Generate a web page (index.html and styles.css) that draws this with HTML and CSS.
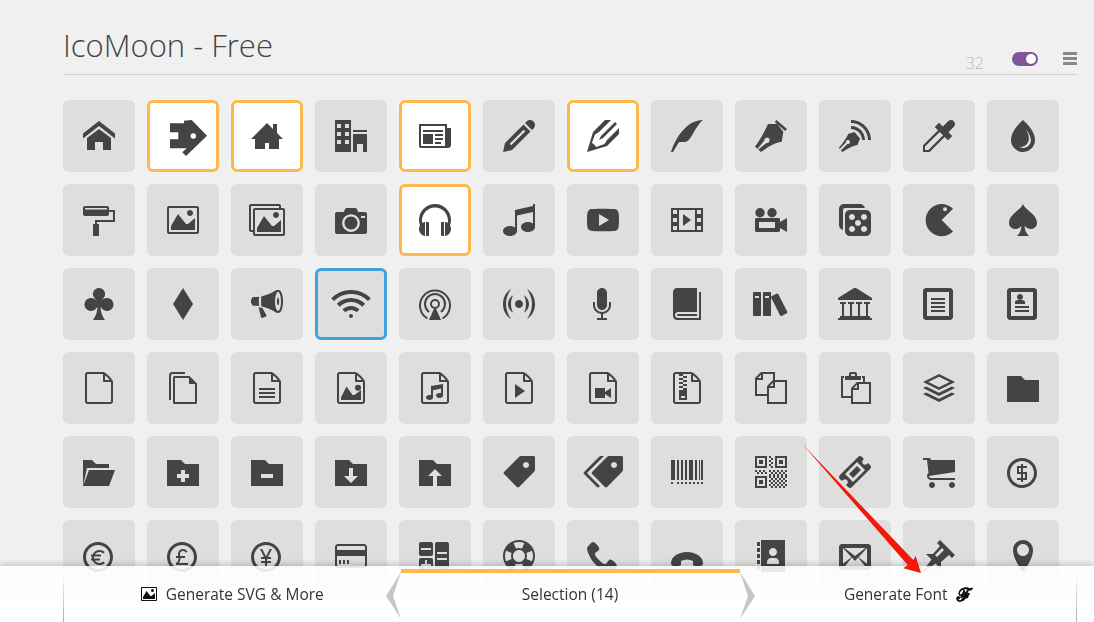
FILE: index.html
```html
<!DOCTYPE html>
<html lang="en">
<head>
	<meta charset="UTF-8">
	<title>IcoMoon - Free</title>
	<link rel="stylesheet" href="styles.css">
</head>
<body>
<div class="page">
	<div class="head">
		<h1 class="title">IcoMoon - Free</h1>
		<div class="tools">
			<span class="size">32</span>
			<span class="toggle"><i class="knob"></i></span>
			<span class="menu"><i></i><i></i><i></i></span>
		</div>
	</div>

	<div class="grid">
		<!-- row 1 -->
		<div class="tile"><svg class="ico" viewBox="0 0 32 32"><path d="M32 18.451l-16-12.42-16 12.42v-5.064l16-12.42 16 12.42zM28 18v12h-8v-8h-8v8h-8v-12l12-9z"/></svg></div>
		<div class="tile sel"><svg class="ico" viewBox="0 0 32 32"><path fill-rule="evenodd" d="M3 3.3h14v-2.6l7.7-.7 15.3 15.7-21 20.3-3.7-3.7 4.4-4h-16.7v-9h8.3v-7h-8.3zM26.3 13.3a2.7 2.7 0 1 0 0 5.4 2.7 2.7 0 1 0 0-5.4z"/></svg></div>
		<div class="tile sel"><svg class="ico" viewBox="0 0 32 32"><path d="M32 19l-6-6v-9h-4v5l-6-6-16 16h4v10h10v-6h4v6h10v-10h4z"/></svg></div>
		<div class="tile"><svg class="ico" viewBox="0 0 32 32"><path d="M0 32h16v-32h-16v32zM10 4h4v4h-4v-4zM10 12h4v4h-4v-4zM10 20h4v4h-4v-4zM2 4h4v4h-4v-4zM2 12h4v4h-4v-4zM2 20h4v4h-4v-4zM18 10h14v2h-14zM18 32h4v-8h6v8h4v-18h-14z"/></svg></div>
		<div class="tile sel"><svg class="ico" viewBox="0 0 32 32"><path d="M28 8v-4h-28v22c0 1.105 0.895 2 2 2h27c1.657 0 3-1.343 3-3v-17h-4zM26 26h-24v-20h24v20zM4 10h20v2h-20zM16 14h8v2h-8zM16 18h8v2h-8zM16 22h6v2h-6zM4 14h10v10h-10z"/></svg></div>
		<div class="tile"><svg class="ico" viewBox="0 0 32 32"><path d="M27 0c2.761 0 5 2.239 5 5 0 1.126-0.372 2.164-1 3l-2 2-7-7 2-2c0.836-0.628 1.874-1 3-1zM2 23l-2 9 9-2 18.5-18.5-7-7-18.5 18.5zM22.362 11.362l-14 14-1.724-1.724 14-14 1.724 1.724z"/></svg></div>
		<div class="tile sel"><svg class="ico" viewBox="0 0 32 32"><path d="M12 20l4-2 14-14-2-2-14 14-2 4zM9.041 27.097c-0.989-2.085-2.052-3.149-4.137-4.137l3.097-8.525 4-2.435 12-12h-6l-12 12-6 20 20-6 12-12v-6l-12 12-2.435 4z"/></svg></div>
		<div class="tile"><svg class="ico" viewBox="0 0 32 32"><path d="M0 32c4-12 14.469-32 32-32-8.219 6.594-12 22-18 22s-6 0-6 0l-6 10h-2z"/></svg></div>
		<div class="tile"><svg class="ico" viewBox="0 0 32 32"><path d="M21.500 0l10.500 9-1.800 2-10.500-9zM13 4l9-.3 6.300 8-1.600 10c-7.700 1.300-13.700 5.300-20.700 10.300l-2.700-2.500 8.200-6.500a2.700 2.700 0 1 0-2.300-2.300l-6.700 8-2.500-2c5-6.700 9-13.700 13-22.700z"/></svg></div>
		<div class="tile"><svg class="ico" viewBox="0 0 32 32"><path d="M12 0c11 0 20 9 20 20h-3c0-9.400-7.600-17-17-17zM12 6c7.700 0 14 6.300 14 14h-3c0-6-5-11-11-11zM9 14l6.500-2 5.500 6.500-2.500 6.500c-5.500 1-10.500 4-15 7l-1.800-1.500 6.800-6.500a2 2 0 1 0-1.500-1.500l-6.500 6.500-.5-1.500c4-4.500 7-8.500 9-13z"/></svg></div>
		<div class="tile"><svg class="ico" viewBox="0 0 32 32"><path d="M30.828 1.172c-1.562-1.562-4.095-1.562-5.657 0l-5.379 5.379-3.793-3.793-4.243 4.243 3.326 3.326-14.754 14.754c-0.252 0.252-0.328 0.626-0.328 0.919v6h6c0.293 0 0.667-0.076 0.919-0.328l14.754-14.754 3.326 3.326 4.243-4.243-3.793-3.793 5.379-5.379c1.562-1.562 1.562-4.095 0-5.657zM5.409 30h-3.409v-3.409l14.674-14.674 3.409 3.409-14.674 14.674z"/></svg></div>
		<div class="tile"><svg class="ico" viewBox="0 0 32 32"><path d="M27.020 14.786c-2.055-5.732-6.41-10.765-11.020-14.786-4.61 4.021-8.965 9.054-11.020 14.786-1.271 3.545-1.396 7.393 0.393 10.794 2.058 3.913 6.288 6.419 10.627 6.419s8.569-2.506 10.627-6.419c1.789-3.401 1.664-7.249 0.393-10.794zM23.086 23.717c-1.4 2.662-4.298 4.283-7.086 4.283-1.382 0-2.719-0.43-3.912-1.126 0.436 0.082 0.88 0.126 1.328 0.126 3.015 0 5.902-1.654 7.354-4.214 1.471-2.596 1.32-5.833 0.417-8.612-0.553-1.703-1.249-3.302-2.082-4.874 1.691 2.174 3.168 4.543 4.102 7.147 0.98 2.733 0.98 5.245-0.121 7.27z"/></svg></div>

		<!-- row 2 -->
		<div class="tile"><svg class="ico" viewBox="0 0 32 32"><path fill-rule="evenodd" d="M2 2h22c1.100 0 2 .900 2 2v2h6v12h-18v2h1c.550 0 1 .450 1 1v10c0 .550-.450 1-1 1h-4c-.550 0-1-.450-1-1v-10c0-.550 .450-1 1-1h1v-4h18v-8h-4v2c0 1.100-.900 2-2 2h-22c-1.100 0-2-.900-2-2v-6c0-1.100 .900-2 2-2zM2 4v1.500h22v-1.500z"/></svg></div>
		<div class="tile"><svg class="ico" viewBox="0 0 32 32"><path d="M29.996 4c0.001 0.001 0.003 0.002 0.004 0.004v23.993c-0.001 0.001-0.002 0.003-0.004 0.004h-27.993c-0.001-0.001-0.003-0.002-0.004-0.004v-23.993c0.001-0.001 0.002-0.003 0.004-0.004h27.993zM30 2h-28c-1.1 0-2 0.9-2 2v24c0 1.1 0.9 2 2 2h28c1.1 0 2-0.9 2-2v-24c0-1.1-0.9-2-2-2v0zM26 9c0 1.657-1.343 3-3 3s-3-1.343-3-3 1.343-3 3-3 3 1.343 3 3zM28 26h-24v-4l7-12 8 10h2l7-6z"/></svg></div>
		<div class="tile"><svg class="ico" viewBox="0 0 32 32"><path transform="translate(-2 0)" d="M34 4h-2v-2c0-1.1-0.9-2-2-2h-28c-1.1 0-2 0.9-2 2v24c0 1.1 0.9 2 2 2h2v2c0 1.1 0.9 2 2 2h28c1.1 0 2-0.9 2-2v-24c0-1.1-0.9-2-2-2zM4 6v20h-1.996c-0.001-0.001-0.003-0.002-0.004-0.004v-23.993c0.001-0.001 0.002-0.003 0.004-0.004h27.993c0.001 0.001 0.003 0.002 0.004 0.004v1.996h-24c-1.1 0-2 0.9-2 2v0zM34 29.996c-0.001 0.001-0.002 0.003-0.004 0.004h-27.993c-0.001-0.001-0.003-0.002-0.004-0.004v-23.993c0.001-0.001 0.002-0.003 0.004-0.004h27.993c0.001 0.001 0.003 0.002 0.004 0.004v23.993zM30 11c0 1.657-1.343 3-3 3s-3-1.343-3-3 1.343-3 3-3 3 1.343 3 3zM32 28h-24v-4l7-12 8 10h2l7-6z"/></svg></div>
		<div class="tile"><svg class="ico" viewBox="0 0 32 32"><path d="M9.5 19c0 3.59 2.91 6.5 6.5 6.5s6.5-2.91 6.5-6.5-2.91-6.5-6.5-6.5-6.5 2.91-6.5 6.5zM30 8h-7c-0.5-2-1-4-3-4h-8c-2 0-2.5 2-3 4h-7c-1.1 0-2 0.9-2 2v18c0 1.1 0.9 2 2 2h28c1.1 0 2-0.9 2-2v-18c0-1.1-0.9-2-2-2zM16 27.875c-4.902 0-8.875-3.973-8.875-8.875s3.973-8.875 8.875-8.875c4.902 0 8.875 3.973 8.875 8.875s-3.973 8.875-8.875 8.875zM30 14h-4v-2h4v2z"/></svg></div>
		<div class="tile sel"><svg class="ico" viewBox="0 0 32 32"><path d="M9 18h-2v14h2c0.55 0 1-0.45 1-1v-12c0-0.55-0.45-1-1-1zM23 18c-0.55 0-1 0.45-1 1v12c0 0.55 0.45 1 1 1h2v-14h-2zM32 16c0-8.837-7.163-16-16-16s-16 7.163-16 16c0 1.919 0.338 3.759 0.958 5.464-0.609 1.038-0.958 2.246-0.958 3.536 0 3.526 2.608 6.443 6 6.929v-13.857c-0.997 0.143-1.927 0.495-2.742 1.012-0.168-0.835-0.258-1.699-0.258-2.584 0-7.18 5.82-13 13-13s13 5.82 13 13c0 0.885-0.088 1.749-0.257 2.584-0.816-0.517-1.745-0.87-2.743-1.013v13.858c3.392-0.485 6-3.402 6-6.929 0-1.29-0.349-2.498-0.958-3.536 0.62-1.705 0.958-3.545 0.958-5.465z"/></svg></div>
		<div class="tile"><svg class="ico" viewBox="0 0 32 32"><path d="M30 0h2v23c0 2.761-3.134 5-7 5s-7-2.239-7-5 3.134-5 7-5c1.959 0 3.729 0.575 5 1.501v-11.501l-16 3.556v15.444c0 2.761-3.134 5-7 5s-7-2.239-7-5 3.134-5 7-5c1.959 0 3.729 0.575 5 1.501v-17.501l18-4z"/></svg></div>
		<div class="tile"><svg class="ico" viewBox="0 0 32 32"><path d="M31.681 9.6c0 0-0.313-2.206-1.275-3.175-1.219-1.275-2.581-1.281-3.206-1.356-4.475-0.325-11.194-0.325-11.194-0.325h-0.012c0 0-6.719 0-11.194 0.325-0.625 0.075-1.987 0.081-3.206 1.356-0.963 0.969-1.269 3.175-1.269 3.175s-0.319 2.588-0.319 5.181v2.425c0 2.587 0.319 5.181 0.319 5.181s0.313 2.206 1.269 3.175c1.219 1.275 2.819 1.231 3.531 1.369 2.563 0.244 10.881 0.319 10.881 0.319s6.725-0.012 11.2-0.331c0.625-0.075 1.987-0.081 3.206-1.356 0.962-0.969 1.275-3.175 1.275-3.175s0.319-2.587 0.319-5.181v-2.425c-0.006-2.588-0.325-5.181-0.325-5.181zM12 22v-12l10 6z"/></svg></div>
		<div class="tile"><svg class="ico" viewBox="0 0 32 32"><path d="M0 4v24h32v-24h-32zM6 26h-4v-4h4v4zM6 18h-4v-4h4v4zM6 10h-4v-4h4v4zM24 26h-16v-20h16v20zM30 26h-4v-4h4v4zM30 18h-4v-4h4v4zM30 10h-4v-4h4v4zM12 10v12l8-6z"/></svg></div>
		<div class="tile"><svg class="ico" viewBox="0 0 32 32"><path fill-rule="evenodd" d="M5 4a4.700 4.700 0 1 0 0 9.400 4.700 4.700 0 1 0 0-9.400zM17 4a4.700 4.700 0 1 0 0 9.400 4.700 4.700 0 1 0 0-9.400zM1.500 14h22c.800 0 1.500 .700 1.500 1.500v2.500l7-4v14l-7-4v2.500c0 .800-.700 1.500-1.500 1.500h-22c-.800 0-1.500-.700-1.500-1.500v-11c0-.800 .700-1.500 1.500-1.500zM4 18v6h16v-6z"/></svg></div>
		<div class="tile"><svg class="ico" viewBox="0 0 32 32"><path d="M27 6h-16c-2.75 0-5 2.25-5 5v16c0 2.75 2.25 5 5 5h16c2.75 0 5-2.25 5-5v-16c0-2.75-2.25-5-5-5zM13 28c-1.657 0-3-1.343-3-3s1.343-3 3-3 3 1.343 3 3-1.343 3-3 3zM13 16c-1.657 0-3-1.343-3-3s1.343-3 3-3 3 1.343 3 3-1.343 3-3 3zM19 22c-1.657 0-3-1.343-3-3s1.343-3 3-3 3 1.343 3 3-1.343 3-3 3zM25 28c-1.657 0-3-1.343-3-3s1.343-3 3-3 3 1.343 3 3-1.343 3-3 3zM25 16c-1.657 0-3-1.343-3-3s1.343-3 3-3 3 1.343 3 3-1.343 3-3 3zM25.899 4c-0.467-2.275-2.491-4-4.899-4h-16c-2.75 0-5 2.25-5 5v16c0 2.408 1.725 4.432 4 4.899v-19.899c0-1.1 0.9-2 2-2h19.899z"/></svg></div>
		<div class="tile"><svg class="ico" viewBox="0 0 32 32"><path fill-rule="evenodd" d="M30.500 4.800c-6.200-6.300-16.300-6.400-22.600-.100s-6.300 16.400 0 22.700 16.400 6.300 22.600 0l-11.300-11.400zM22.500 3.300a2 2 0 1 0 0 4 2 2 0 1 0 0-4z" transform="translate(-.5 0)"/></svg></div>
		<div class="tile"><svg class="ico" viewBox="0 0 32 32"><path d="M16 0c-2 6-14 10-14 19 0 3.500 3 6 6 6 2.500 0 4.500-1 6.500-3-.2 4-1.500 7-4.500 10h12c-3-3-4.300-6-4.500-10 2 2 4 3 6.500 3 3 0 6-2.500 6-6 0-9-12-13-14-19z"/></svg></div>

		<!-- row 3 -->
		<div class="tile"><svg class="ico" viewBox="0 0 32 32"><path d="M16 0a6 6 0 0 1 4.500 10c-.8 .9-2 2-2.300 3 1-2 3.300-3 5.800-3a6.500 6.500 0 1 1-5.500 10l-1-1c.3 5 1.500 9 4.500 13h-12c3-4 4.200-8 4.500-13l-1 1a6.500 6.500 0 1 1-5.500-10c2.500 0 4.800 1 5.800 3-.3-1-1.500-2.100-2.300-3a6 6 0 0 1 4.500-10z"/></svg></div>
		<div class="tile"><svg class="ico" viewBox="0 0 32 32"><path d="M16 0l10 16-10 16-10-16z"/></svg></div>
		<div class="tile"><svg class="ico" viewBox="0 0 32 32"><path d="M32 13.414c0-6.279-1.837-11.373-4.109-11.413 0.009-0 0.018-0.001 0.027-0.001h-2.592c0 0-6.088 4.573-14.851 6.367-0.268 1.415-0.438 3.102-0.438 5.047s0.171 3.631 0.438 5.047c8.763 1.794 14.851 6.367 14.851 6.367h2.592c-0.009 0-0.018-0.001-0.027-0.002 2.272-0.040 4.109-5.133 4.109-11.412zM27.026 23.102c-0.293 0-0.61-0.304-0.773-0.486-0.395-0.439-0.775-1.124-1.1-1.979-0.727-1.913-1.127-4.478-1.127-7.223s0.4-5.309 1.127-7.223c0.325-0.855 0.705-1.54 1.1-1.979 0.163-0.182 0.48-0.486 0.773-0.486s0.61 0.304 0.773 0.486c0.395 0.439 0.775 1.124 1.1 1.979 0.727 1.913 1.127 4.478 1.127 7.223s-0.4 5.309-1.127 7.223c-0.325 0.855-0.705 1.54-1.1 1.979-0.163 0.181-0.48 0.486-0.773 0.486zM7.869 13.414c0-1.623 0.119-3.201 0.345-4.659-1.48 0.205-2.779 0.323-4.386 0.323-2.096 0-2.096 0-2.096 0l-1.733 2.959v2.755l1.733 2.959c0 0 0 0 2.096 0 1.606 0 2.905 0.118 4.386 0.323-0.226-1.458-0.345-3.036-0.345-4.659zM11.505 20.068l-4-0.766 2.558 10.048c0.132 0.52 0.648 0.782 1.146 0.583l3.705-1.483c0.498-0.199 0.698-0.749 0.444-1.221l-3.853-7.161zM27.026 17.148c-0.113 0-0.235-0.117-0.298-0.187-0.152-0.169-0.299-0.433-0.424-0.763-0.28-0.738-0.434-1.726-0.434-2.784s0.154-2.046 0.434-2.784c0.125-0.33 0.272-0.593 0.424-0.763 0.063-0.070 0.185-0.187 0.298-0.187s0.235 0.117 0.298 0.187c0.152 0.169 0.299 0.433 0.424 0.763 0.28 0.737 0.434 1.726 0.434 2.784s-0.154 2.046-0.434 2.784c-0.125 0.33-0.272 0.593-0.424 0.763-0.063 0.070-0.185 0.187-0.298 0.187z"/></svg></div>
		<div class="tile hit"><svg class="ico" viewBox="0 0 32 32"><path transform="translate(-4 0)" d="M20 18c3.308 0 6.308 1.346 8.481 3.519l-2.827 2.827c-1.449-1.449-3.449-2.346-5.654-2.346s-4.206 0.897-5.654 2.346l-2.827-2.827c2.173-2.173 5.173-3.519 8.481-3.519zM5.858 15.858c3.777-3.777 8.8-5.858 14.142-5.858s10.365 2.080 14.142 5.858l-2.828 2.828c-3.022-3.022-7.040-4.686-11.314-4.686s-8.292 1.664-11.314 4.686l-2.828-2.828zM30.899 4.201c3.334 1.41 6.329 3.429 8.899 6v0l-2.828 2.828c-4.533-4.533-10.56-7.029-16.971-7.029s-12.438 2.496-16.971 7.029l-2.828-2.828c2.571-2.571 5.565-4.589 8.899-6 3.453-1.461 7.12-2.201 10.899-2.201s7.446 0.741 10.899 2.201zM18 28c0-1.105 0.895-2 2-2s2 0.895 2 2c0 1.105-0.895 2-2 2s-2-0.895-2-2z"/></svg></div>
		<div class="tile"><svg class="ico" viewBox="0 0 32 32"><g class="line"><path d="M8.500 30.500a15 15 0 1 1 15 0"/><path d="M10 24a10 10 0 1 1 12 0"/><circle cx="16" cy="16" r="4"/></g><path d="M10 32l6-13.500 6 13.500z"/></svg></div>
		<div class="tile"><svg class="ico" viewBox="0 0 32 32"><path d="M12 16c0-2.209 1.791-4 4-4s4 1.791 4 4c0 2.209-1.791 4-4 4s-4-1.791-4-4zM20.761 7.204c3.12 1.692 5.239 4.997 5.239 8.796s-2.119 7.104-5.239 8.796c1.377-2.191 2.239-5.321 2.239-8.796s-0.862-6.605-2.239-8.796zM8 16c0 3.475 0.862 6.605 2.239 8.796-3.12-1.692-5.239-4.997-5.239-8.796s2.119-7.104 5.239-8.796c-1.377 2.191-2.239 5.321-2.239 8.796zM24 1c5 3 8 8.500 8 15s-3 12-8 15c3-4.500 5-9.500 5-15s-2-10.500-5-15zM8 31c-5-3-8-8.500-8-15s3-12 8-15c-3 4.500-5 9.500-5 15s2 10.500 5 15z"/></svg></div>
		<div class="tile"><svg class="ico" viewBox="0 0 32 32"><path d="M15 22c2.761 0 5-2.239 5-5v-12c0-2.761-2.239-5-5-5s-5 2.239-5 5v12c0 2.761 2.239 5 5 5zM22 14v3c0 3.866-3.134 7-7 7s-7-3.134-7-7v-3h-2v3c0 4.632 3.500 8.447 8 8.944v4.056h-4v2h10v-2h-4v-4.056c4.500-.497 8-4.312 8-8.944v-3h-2z"/></svg></div>
		<div class="tile"><svg class="ico" viewBox="0 0 32 32"><path d="M28 4v26h-21c-1.657 0-3-1.343-3-3s1.343-3 3-3h19v-24h-20c-2.2 0-4 1.8-4 4v24c0 2.2 1.8 4 4 4h24v-28h-2zM7.002 26v0c-0.001 0-0.001 0-0.002 0-0.552 0-1 0.448-1 1s0.448 1 1 1c0.001 0 0.001-0 0.002-0v0h18.997v-2h-18.997z"/></svg></div>
		<div class="tile"><svg class="ico" viewBox="0 0 32 32"><path transform="translate(-2 0)" fill-rule="evenodd" d="M7 4h-6c-0.55 0-1 0.45-1 1v22c0 0.55 0.45 1 1 1h6c0.55 0 1-0.45 1-1v-22c0-0.55-0.45-1-1-1zM6 10h-4v-2h4v2zM17 4h-6c-0.55 0-1 0.45-1 1v22c0 0.55 0.45 1 1 1h6c0.55 0 1-0.45 1-1v-22c0-0.55-0.45-1-1-1zM16 10h-4v-2h4v2zM23.909 5.546l-5.358 2.7c-0.491 0.247-0.691 0.852-0.443 1.343l8.999 17.861c0.247 0.491 0.852 0.691 1.343 0.443l5.358-2.7c0.491-0.247 0.691-0.852 0.443-1.343l-8.999-17.861c-0.247-0.491-0.852-0.691-1.343-0.443z"/></svg></div>
		<div class="tile"><svg class="ico" viewBox="0 0 32 32"><path transform="translate(-1 0)" d="M32 30v-2h-2v-12h2v-2h-6v2h2v12h-6v-12h2v-2h-6v2h2v12h-6v-12h2v-2h-6v2h2v12h-6v-12h2v-2h-6v2h2v12h-2v2h-2v2h34v-2h-2zM16 0h2l16 10v2h-34v-2z"/></svg></div>
		<div class="tile"><svg class="ico" viewBox="0 0 32 32"><path d="M27 0h-24c-1.65 0-3 1.35-3 3v26c0 1.65 1.35 3 3 3h24c1.65 0 3-1.35 3-3v-26c0-1.65-1.35-3-3-3zM26 28h-22v-24h22v24zM8 14h14v2h-14zM8 18h14v2h-14zM8 22h14v2h-14zM8 10h14v2h-14z"/></svg></div>
		<div class="tile"><svg class="ico" viewBox="0 0 32 32"><path d="M27 0h-24c-1.65 0-3 1.35-3 3v26c0 1.65 1.35 3 3 3h24c1.65 0 3-1.35 3-3v-26c0-1.65-1.35-3-3-3zM26 28h-22v-24h22v24zM8 18h14v2h-14zM8 22h14v2h-14zM10 9c0-1.657 1.343-3 3-3s3 1.343 3 3-1.343 3-3 3-3-1.343-3-3zM15 12h-4c-1.65 0-3 0.9-3 2v2h10v-2c0-1.1-1.35-2-3-2z"/></svg></div>

		<!-- row 4 -->
		<div class="tile"><svg class="ico" viewBox="0 0 32 32"><path id="file-o" d="M28.681 7.159c-0.694-0.947-1.662-2.053-2.724-3.116s-2.169-2.030-3.116-2.724c-1.612-1.182-2.393-1.319-2.841-1.319h-15.5c-1.378 0-2.5 1.121-2.5 2.5v27c0 1.378 1.122 2.5 2.5 2.5h23c1.378 0 2.5-1.122 2.5-2.5v-19.5c0-0.448-0.137-1.23-1.319-2.841zM24.543 5.457c0.959 0.959 1.712 1.825 2.268 2.543h-4.811v-4.811c0.718 0.556 1.584 1.309 2.543 2.268zM28 29.5c0 0.271-0.229 0.5-0.5 0.5h-23c-0.271 0-0.5-0.229-0.5-0.5v-27c0-0.271 0.229-0.5 0.5-0.5 0 0 15.499-0 15.5 0v7c0 0.552 0.448 1 1 1h7v19.5z"/></svg></div>
		<div class="tile"><svg class="ico" viewBox="0 0 32 32"><g class="line"><path d="M3 28v-24.500c0-1.400 1-2.500 2.500-2.500h12.500"/><path d="M7.500 5h14.500l7 7v18.500c0 .300-.200 .500-.500 .500h-21c-.300 0-.500-.200-.500-.500v-25c0-.300 .200-.500 .500-.500z"/></g><path d="M22 5l7 7h-7z"/></svg></div>
		<div class="tile"><svg class="ico" viewBox="0 0 32 32"><use href="#file-o"/><path d="M8 16h16v2h-16zM8 20h16v2h-16zM8 24h16v2h-16z"/></svg></div>
		<div class="tile"><svg class="ico" viewBox="0 0 32 32"><use href="#file-o"/><path d="M26 15.700a3 3 0 1 1-6 0 3 3 0 1 1 6 0zM6 28v-2.500l5.500-11 6 8.500 2 0 6.500-5v10z"/></svg></div>
		<div class="tile"><svg class="ico" viewBox="0 0 32 32"><use href="#file-o"/><path d="M24 12v11.500c0 1.400-1.600 2.500-3.500 2.500s-3.500-1.100-3.500-2.500 1.600-2.500 3.500-2.500c.600 0 1 .100 1.500 .300v-4.800l-8 1.800v7.200c0 1.400-1.600 2.500-3.500 2.500s-3.500-1.100-3.500-2.500 1.600-2.500 3.500-2.500c.600 0 1 .100 1.500 .300v-9.300z"/></svg></div>
		<div class="tile"><svg class="ico" viewBox="0 0 32 32"><use href="#file-o"/><path d="M12 12l10 7-10 7z"/></svg></div>
		<div class="tile"><svg class="ico" viewBox="0 0 32 32"><use href="#file-o"/><path d="M8 16h10v10h-10zM18 20l6-4v10l-6-4z"/></svg></div>
		<div class="tile"><svg class="ico" viewBox="0 0 32 32"><use href="#file-o"/><path fill-rule="evenodd" d="M8 2h4v2h-4zM12 4h4v2h-4zM8 6h4v2h-4zM12 8h4v2h-4zM8 10h4v2h-4zM12 12h4v2h-4zM8 14h4v2h-4zM12 16h4v2h-4zM8 18h8v10h-8zM10 24v2h4v-2z"/></svg></div>
		<div class="tile"><svg class="ico" viewBox="0 0 32 32"><path d="M20 8v-8h-14l-6 6v18h12v8h20v-24h-12zM6 2.828v3.172h-3.172l3.172-3.172zM2 22v-14h6v-6h10v6l-6 6v8h-10zM18 10.828v3.172h-3.172l3.172-3.172zM30 30h-16v-14h6v-6h10v20z"/></svg></div>
		<div class="tile"><svg class="ico" viewBox="0 0 32 32"><path d="M22 4h-4v-2c0-1.1-0.9-2-2-2h-4c-1.1 0-2 0.9-2 2v2h-4v4h16v-4zM16 4h-4v-1.996c0.001-0.001 0.002-0.003 0.004-0.004h3.993c0.001 0.001 0.003 0.002 0.004 0.004v1.996zM26 10v-5c0-0.55-0.45-1-1-1h-2v2h1v4h-6l-6 6v8h-8v-18h1v-2h-2c-0.55 0-1 0.45-1 1v20c0 0.55 0.45 1 1 1h9v6h20v-22h-6zM18 12.828v3.172h-3.172l3.172-3.172zM30 30h-16v-12h6v-6h10v18z"/></svg></div>
		<div class="tile"><svg class="ico" viewBox="0 0 32 32"><path d="M32 10l-16-8-16 8 16 8 16-8zM16 4.655l10.689 5.345-10.689 5.345-10.689-5.345 10.689-5.345zM28.795 14.398l3.205 1.602-16 8-16-8 3.205-1.602 12.795 6.398zM28.795 20.398l3.205 1.602-16 8-16-8 3.205-1.602 12.795 6.398z"/></svg></div>
		<div class="tile"><svg class="ico" viewBox="0 0 32 32"><path d="M14 4l4 4h14v22h-32v-26z"/></svg></div>

		<!-- row 5 -->
		<div class="tile"><svg class="ico" viewBox="0 0 32 32"><path d="M26 30l6-16h-26l-6 16zM4 12l-4 18v-26h9l4 4h13v4z"/></svg></div>
		<div class="tile"><svg class="ico" viewBox="0 0 32 32"><path d="M18 8l-4-4h-14v26h32v-22h-14zM22 22h-4v4h-4v-4h-4v-4h4v-4h4v4h4v4z"/></svg></div>
		<div class="tile"><svg class="ico" viewBox="0 0 32 32"><path d="M18 8l-4-4h-14v26h32v-22h-14zM22 22h-12v-4h12v4z"/></svg></div>
		<div class="tile"><svg class="ico" viewBox="0 0 32 32"><path d="M18 8l-4-4h-14v26h32v-22h-14zM16 27l-7-7h5v-8h4v8h5l-7 7z"/></svg></div>
		<div class="tile"><svg class="ico" viewBox="0 0 32 32"><path d="M18 8l-4-4h-14v26h32v-22h-14zM16 13l7 7h-5v10h-4v-10h-5l7-7z"/></svg></div>
		<div class="tile"><svg class="ico" viewBox="0 0 32 32"><path d="M30.500 0h-12c-0.825 0-1.977 0.477-2.561 1.061l-14.879 14.879c-0.583 0.583-0.583 1.538 0 2.121l12.879 12.879c0.583 0.583 1.538 0.583 2.121 0l14.879-14.879c0.583-0.583 1.061-1.736 1.061-2.561v-12c0-0.825-0.675-1.500-1.500-1.500zM23 12c-1.657 0-3-1.343-3-3s1.343-3 3-3 3 1.343 3 3-1.343 3-3 3z"/></svg></div>
		<div class="tile"><svg class="ico" viewBox="0 0 32 32"><path transform="translate(-4 0)" d="M38.500 0h-12c-0.825 0-1.977 0.477-2.561 1.061l-14.879 14.879c-0.583 0.583-0.583 1.538 0 2.121l12.879 12.879c0.583 0.583 1.538 0.583 2.121 0l14.879-14.879c0.583-0.583 1.061-1.736 1.061-2.561v-12c0-0.825-0.675-1.500-1.500-1.500zM31 12c-1.657 0-3-1.343-3-3s1.343-3 3-3 3 1.343 3 3-1.343 3-3 3zM4 17l17-17h-2.500c-0.825 0-1.977 0.477-2.561 1.061l-14.879 14.879c-0.583 0.583-0.583 1.538 0 2.121l12.879 12.879c0.583 0.583 1.538 0.583 2.121 0l0.939-0.939-13-13z"/></svg></div>
		<div class="tile"><svg class="ico" viewBox="0 0 32 32"><path d="M0 4h4v20h-4zM6 4h2v20h-2zM10 4h2v20h-2zM14 4h2v20h-2zM18 4h4v20h-4zM24 4h2v20h-2zM28 4h1v20h-1zM30 4h2v20h-2zM0 26h2v2h-2zM6 26h2v2h-2zM10 26h2v2h-2zM14 26h2v2h-2zM18 26h2v2h-2zM22 26h2v2h-2zM26 26h2v2h-2zM30 26h2v2h-2z"/></svg></div>
		<div class="tile"><svg class="ico" viewBox="0 0 32 32"><path d="M10 2v8h-8v-8h8zM12 0h-12v12h12v-12zM4 4h4v4h-4zM30 2v8h-8v-8h8zM32 0h-12v12h12v-12zM24 4h4v4h-4zM10 22v8h-8v-8h8zM12 20h-12v12h12v-12zM4 24h4v4h-4zM14 0h2v2h-2zM16 2h2v2h-2zM14 4h2v2h-2zM16 6h2v2h-2zM14 8h2v2h-2zM16 10h2v2h-2zM0 14h2v2h-2zM4 14h2v2h-2zM8 14h2v2h-2zM2 16h2v2h-2zM6 16h2v2h-2zM10 16h2v2h-2zM14 20h2v2h-2zM16 22h2v2h-2zM14 24h2v2h-2zM16 26h2v2h-2zM14 28h2v2h-2zM16 30h2v2h-2z"/><path class="dots" d="M14 15h18M16 17h16M14 19h18M18 21h14M20 23h12M18 25h14M20 27h12M18 29h14M20 31h12"/></svg></div>
		<div class="tile"><svg class="ico" viewBox="0 0 32 32"><path d="M18 10l4 4-8 8-4-4zM31.298 9.297l-2.297-2.297-1 1c-0.512 0.512-1.219 0.828-2 0.828-1.562 0-2.829-1.266-2.829-2.828 0-0.781 0.317-1.489 0.829-2.001l1-1-2.297-2.297c-0.936-0.936-2.469-0.936-3.405 0l-18.595 18.595c-0.936 0.936-0.936 2.469 0 3.405l2.297 2.297 0.999-1c0.512-0.513 1.22-0.83 2.001-0.83 1.562 0 2.828 1.266 2.828 2.828 0 0.781-0.317 1.489-0.829 2.001l-1 1 2.297 2.297c0.936 0.936 2.469 0.936 3.405 0l18.595-18.595c0.936-0.936 0.936-2.469 0-3.405zM14 26l-8-8 12-12 8 8-12 12z"/></svg></div>
		<div class="tile"><svg class="ico" viewBox="0 0 32 32"><path d="M12 29c0 1.657-1.343 3-3 3s-3-1.343-3-3 1.343-3 3-3 3 1.343 3 3zM32 29c0 1.657-1.343 3-3 3s-3-1.343-3-3 1.343-3 3-3 3 1.343 3 3zM32 16v-12h-24c0-1.105-0.895-2-2-2h-6v2h4l1.502 12.877c-0.915 0.733-1.502 1.859-1.502 3.123 0 2.209 1.791 4 4 4h24v-2h-24c-1.105 0-2-0.895-2-2 0-0.007 0-0.014 0-0.020l26-3.980z"/></svg></div>
		<div class="tile"><svg class="ico" viewBox="0 0 32 32"><path id="coin" d="M15 2c-8.284 0-15 6.716-15 15s6.716 15 15 15c8.284 0 15-6.716 15-15s-6.716-15-15-15zM15 29c-6.627 0-12-5.373-12-12s5.373-12 12-12c6.627 0 12 5.373 12 12s-5.373 12-12 12z"/><path d="M16 16v-4h4v-2h-4v-2h-2v2h-4v8h4v4h-4v2h4v2h2v-2h4l-0-8h-4zM14 16h-2v-4h2v4zM18 22h-2v-4h2v4z"/></svg></div>

		<!-- row 6 -->
		<div class="tile"><svg class="ico" viewBox="0 0 32 32"><use href="#coin"/><path d="M16.500 23c-2 0-3.700-1-4.700-2.500h5.200v-2h-5.900c-.060-.300-.100-.650-.100-1s.040-.700 .100-1h6.900v-2h-6.200c1-1.500 2.700-2.500 4.700-2.500 1.500 0 2.900 .600 3.900 1.500l1.400-1.400c-1.400-1.300-3.300-2.100-5.300-2.100-3.100 0-5.800 1.900-7 4.500h-1.500v2h.850c-.050 .350-.070 .650-.070 1s.020 .650 .070 1h-.850v2h1.500c1.200 2.600 3.900 4.500 7 4.500 2 0 3.900-.800 5.300-2.100l-1.400-1.400c-1 .900-2.400 1.500-3.900 1.500z"/></svg></div>
		<div class="tile"><svg class="ico" viewBox="0 0 32 32"><use href="#coin"/><path d="M21 25h-12v-2c1.500-1 2.500-2.500 2.500-4.500v-.5h-2.500v-2h2.300c-.2-.7-.3-1.400-.3-2 0-2.800 2.200-5 5-5 2 0 3.700 1.100 4.500 2.800l-1.800 .9c-.5-1-1.500-1.700-2.700-1.700-1.700 0-3 1.300-3 3 0 .7 .1 1.300 .4 2h4.600v2h-4.600v.5c0 1.700-.6 3.200-1.500 4.500h9.100z"/></svg></div>
		<div class="tile"><svg class="ico" viewBox="0 0 32 32"><use href="#coin"/><path d="M17 17h3v2h-4v2h4v2h-4v4h-2v-4h-4v-2h4v-2h-4v-2h3l-4-8h2.300l3.700 7.400 3.700-7.400h2.300z"/></svg></div>
		<div class="tile"><svg class="ico" viewBox="0 0 32 32"><path d="M29 4h-26c-1.65 0-3 1.35-3 3v18c0 1.65 1.35 3 3 3h26c1.65 0 3-1.35 3-3v-18c0-1.65-1.35-3-3-3zM3 6h26c0.542 0 1 0.458 1 1v3h-28v-3c0-0.542 0.458-1 1-1zM29 26h-26c-0.542 0-1-0.458-1-1v-9h28v9c0 0.542-0.458 1-1 1zM4 20h2v4h-2zM8 20h2v4h-2zM12 20h2v4h-2z"/></svg></div>
		<div class="tile"><svg class="ico" viewBox="0 0 32 32"><path d="M12 2h-10c-1.100 0-2 0.900-2 2v10c0 1.100 0.900 2 2 2h10c1.100 0 2-0.900 2-2v-10c0-1.100-0.900-2-2-2zM12 10h-10v-2h10v2zM28 2h-10c-1.100 0-2 0.900-2 2v26c0 1.100 0.900 2 2 2h10c1.100 0 2-0.900 2-2v-26c0-1.100-0.900-2-2-2zM28 20h-10v-2h10v2zM28 14h-10v-2h10v2zM12 18h-10c-1.100 0-2 0.900-2 2v10c0 1.100 0.900 2 2 2h10c1.100 0 2-0.900 2-2v-10c0-1.100-0.900-2-2-2zM12 26h-4v4h-2v-4h-4v-2h4v-4h2v4h4v2z"/></svg></div>
		<div class="tile"><svg class="ico" viewBox="0 0 32 32"><path d="M16 0c-8.837 0-16 7.163-16 16s7.163 16 16 16 16-7.163 16-16-7.163-16-16-16zM10 16c0-3.314 2.686-6 6-6s6 2.686 6 6-2.686 6-6 6-6-2.686-6-6zM28.937 21.359v0l-5.544-2.297c0.391-0.943 0.608-1.977 0.608-3.062s-0.216-2.119-0.608-3.062l5.544-2.297c0.685 1.651 1.063 3.460 1.063 5.359s-0.379 3.708-1.063 5.359zM21.359 3.063v0 0l-2.297 5.544c-0.943-0.391-1.977-0.607-3.062-0.607s-2.119 0.216-3.062 0.607l-2.297-5.544c1.651-0.684 3.460-1.063 5.359-1.063s3.708 0.379 5.359 1.063zM3.063 10.641l5.544 2.297c-0.391 0.943-0.608 1.977-0.608 3.062s0.216 2.119 0.607 3.062l-5.544 2.297c-0.684-1.651-1.063-3.460-1.063-5.359s0.379-3.708 1.063-5.359zM10.641 28.937l2.297-5.544c0.943 0.391 1.977 0.608 3.062 0.608s2.119-0.216 3.062-0.608l2.297 5.544c-1.651 0.684-3.460 1.063-5.359 1.063s-3.708-0.379-5.359-1.063z"/></svg></div>
		<div class="tile"><svg class="ico" viewBox="0 0 32 32"><path d="M22 20c-2 2-2 4-4 4s-4-2-6-4-4-4-4-6 2-2 4-4-4-8-6-8-6 6-6 6c0 4 4.109 12.109 8 16s12 8 16 8c0 0 6-4 6-6s-6-8-8-6z"/></svg></div>
		<div class="tile"><svg class="ico" viewBox="0 0 32 32"><path d="M0 23c0-6 7-11 16-11s16 5 16 11c0 2-1 3-3 3h-5c-1.500 0-2-1-2-2v-3c-2-1-4-1.500-6-1.500s-4 .500-6 1.500v3c0 1-.500 2-2 2h-5c-2 0-3-1-3-3z"/></svg></div>
		<div class="tile"><svg class="ico" viewBox="0 0 32 32"><path d="M6 0v32h24v-32h-24zM18 8.010c2.203 0 3.990 1.786 3.990 3.990s-1.786 3.990-3.990 3.990-3.990-1.786-3.990-3.990 1.786-3.990 3.990-3.990v0zM24 24h-12v-2c0-2.209 1.791-4 4-4v0h4c2.209 0 4 1.791 4 4v2zM2 2h3v4h-3zM2 8h3v4h-3zM2 14h3v4h-3zM2 20h3v4h-3zM2 26h3v4h-3z"/></svg></div>
		<div class="tile"><svg class="ico" viewBox="0 0 32 32"><path d="M29 4h-26c-1.65 0-3 1.35-3 3v20c0 1.65 1.35 3 3 3h26c1.65 0 3-1.35 3-3v-20c0-1.65-1.35-3-3-3zM12.461 17.199l-8.461 6.59v-15.676l8.461 9.086zM5.512 8h20.976l-10.488 7.875-10.488-7.875zM12.79 17.553l3.21 3.447 3.21-3.447 6.58 8.447h-19.579l6.58-8.447zM19.539 17.199l8.461-9.086v15.676l-8.461-6.59z"/></svg></div>
		<div class="tile"><svg class="ico" viewBox="0 0 32 32"><path d="M17 0l-3 3 3 3-7 8h-7l5.500 5.500-8.500 11.269v1.231h1.231l11.269-8.500 5.500 5.500v-7l8-7 3 3 3-3-15-15zM14 17l-2-2 7-7 2 2-7 7z"/></svg></div>
		<div class="tile"><svg class="ico" viewBox="0 0 32 32"><path d="M16 0c-5.523 0-10 4.477-10 10 0 10 10 22 10 22s10-12 10-22c0-5.523-4.477-10-10-10zM16 16c-3.314 0-6-2.686-6-6s2.686-6 6-6 6 2.686 6 6-2.686 6-6 6z"/></svg></div>
	</div>
</div>

<div class="bar">
	<div class="bar-in">
		<div class="tab">
			<svg class="tab-ico" viewBox="0 0 32 32"><path d="M29.996 4c0.001 0.001 0.003 0.002 0.004 0.004v23.993c-0.001 0.001-0.002 0.003-0.004 0.004h-27.993c-0.001-0.001-0.003-0.002-0.004-0.004v-23.993c0.001-0.001 0.002-0.003 0.004-0.004h27.993zM30 2h-28c-1.1 0-2 0.9-2 2v24c0 1.1 0.9 2 2 2h28c1.1 0 2-0.9 2-2v-24c0-1.1-0.9-2-2-2v0zM26 9c0 1.657-1.343 3-3 3s-3-1.343-3-3 1.343-3 3-3 3 1.343 3 3zM28 26h-24v-4l7-12 8 10h2l7-6z"/></svg>
			<span>Generate SVG &amp; More</span>
		</div>
		<div class="tab tab-mid">
			<svg class="chev chev-l" viewBox="0 0 15 47"><path d="M15 0l-15 24 15 23-8-23z"/></svg>
			<span>Selection (14)</span>
			<svg class="chev chev-r" viewBox="0 0 15 47"><path d="M0 0l15 24-15 23 8-23z"/></svg>
		</div>
		<div class="tab">
			<span>Generate Font</span>
			<span class="script-f">ℱ</span>
		</div>
	</div>
</div>

<svg class="arrow" viewBox="0 0 130 140"><polygon points="7.500,4.300 118.300,120 120.700,116 126,133 108.300,128.300 112.700,125"/></svg>
</body>
</html>
```

FILE: styles.css
```css
*{margin: 0;padding: 0;box-sizing: border-box;}
html,body{height: 100%;overflow: hidden;}
body{
	background: #f0f0f0;
	color: #444;
	font-family: "Open Sans", "Liberation Sans", sans-serif;
}
.page{
	height: 622px;
	overflow: hidden;
	padding: 0 17px 0 63px;
}

/*top*/
.head{
	height: 75px;
	display: flex;
	justify-content: space-between;
	align-items: flex-end;
	border-bottom: 1px solid #d0d0d0;
}
.title{
	font-size: 31px;
	font-weight: 300;
	line-height: 40px;
	padding-bottom: 9px;
	color: #444;
}
.tools{
	display: flex;
	align-items: center;
	height: 16px;
	margin-bottom: 6px;
}
.size{
	font-size: 16px;
	font-weight: 300;
	color: #bbb;
	margin: 0 28px 0 0;
	line-height: 16px;
	padding-top: 5px;
}
.toggle{
	width: 26px;
	height: 14px;
	border-radius: 7px;
	background: #7e5695;
	display: flex;
	justify-content: flex-end;
	align-items: center;
	padding-right: 2px;
	margin-right: 25px;
	margin-bottom: 3px;
}
.knob{
	width: 10px;
	height: 10px;
	border-radius: 50%;
	background: #fff;
}
.menu{
	width: 14px;
	display: flex;
	flex-direction: column;
	gap: 2px;
	margin-bottom: 3px;
}
.menu i{
	height: 3px;
	background: #888;
}

/*icons*/
.grid{
	display: flex;
	flex-wrap: wrap;
	gap: 12px;
	padding-top: 25px;
}
.tile{
	width: 72px;
	height: 72px;
	border-radius: 6px;
	background: #dedede;
	display: flex;
	align-items: center;
	justify-content: center;
}
.sel{
	background: #fff;
	border: 3px solid #ffb84d;
}
.hit{
	border: 3px solid #42a0de;
}
.ico{
	width: 32px;
	height: 32px;
	fill: #444;
	overflow: visible;
}
.line{
	fill: none;
	stroke: #444;
	stroke-width: 2;
}
.dots{
	fill: none;
	stroke: #444;
	stroke-width: 2;
	stroke-dasharray: 2 2;
}

/*bottom bar*/
.bar{
	position: fixed;
	left: 0;
	right: 0;
	bottom: 0;
	height: 56px;
	background: linear-gradient(rgba(255,255,255,.88), rgba(255,255,255,.97));
	box-shadow: 0 -2px 6px rgba(0,0,0,.18);
	padding: 0 17px 0 63px;
}
.bar-in{
	height: 100%;
	display: grid;
	grid-template-columns: 1fr 339px 1fr;
	border-style: solid;
	border-width: 0 1px;
	border-image: linear-gradient(rgba(170,170,170,0) 12%, #aaa) 1;
}
.tab{
	display: flex;
	align-items: center;
	justify-content: center;
	gap: 9px;
	font-size: 15.5px;
	color: #333;
}
.tab-mid{
	position: relative;
	margin-top: 3px;
	height: 53px;
	border-top: 4px solid #ffb84d;
	padding-bottom: 7px;
}
.tab-ico{
	width: 16px;
	height: 16px;
	fill: #111;
}
.chev{
	position: absolute;
	top: -1px;
	width: 15px;
	height: 47px;
	fill: #c6c6c6;
}
.chev-l{left: -15px;}
.chev-r{right: -15px;}
.script-f{
	font-family: "DejaVu Serif", serif;
	font-size: 18px;
	font-weight: bold;
	color: #111;
	-webkit-text-stroke: .4px #111;
}

/*annotation*/
.arrow{
	position: fixed;
	left: 795px;
	top: 440px;
	width: 130px;
	height: 140px;
	fill: #f5170a;
}
```
